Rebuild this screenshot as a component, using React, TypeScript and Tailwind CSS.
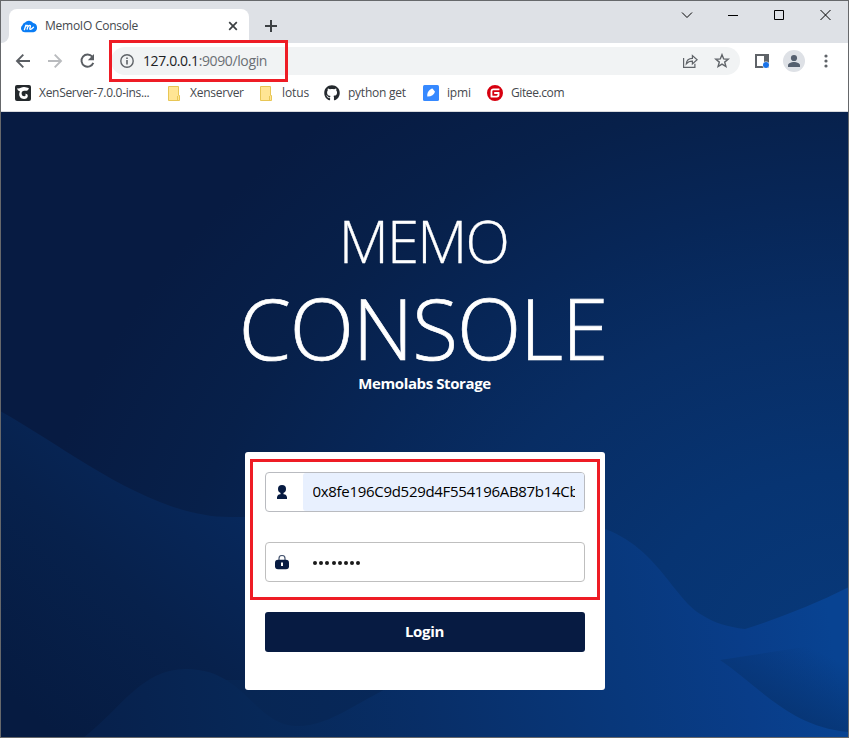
import React from "react";
import { SiGitee } from "react-icons/si";
import { FaGithub } from "react-icons/fa";

function TabStrip() {
  return (
    <div className="flex h-[42px] shrink-0 items-end bg-[#dee1e6]">
      <svg width="8" height="8" viewBox="0 0 8 8" className="shrink-0">
        <path d="M8 0v8H0a8 8 0 0 0 8-8z" fill="#fff" />
      </svg>
      <div className="flex h-[34px] w-[240px] items-center rounded-t-lg bg-white pl-3">
        <svg width="16" height="16" viewBox="0 0 16 16" className="shrink-0">
          <path d="M4 14.300a4 4 0 0 1-2.600-7A4 4 0 0 1 4 4.600a5 5 0 0 1 8.200.5 4.700 4.700 0 0 1 .2 9.200z" fill="#0a7df5" />
          <path d="M3.400 11.700 4.900 7.200M4.400 8.900c1.100-1.800 2.900-2.200 2.500-.4l-.8 2.700M6.800 8.900c1.200-1.800 3-2.200 2.600-.4l-.6 2c-.3 1.300 1.300 1.300 3.700-1.200" fill="none" stroke="#fff" strokeWidth="1.300" strokeLinejoin="round" strokeLinecap="round" />
        </svg>
        <span className="ml-2 w-[94px] whitespace-nowrap text-[12px] tracking-[-0.25px] text-[#45494e]">MemoIO Console</span>
        <svg width="10" height="10" viewBox="0 0 10 10" className="ml-auto mr-[11px]">
          <path d="m1.200 1.200 7.600 7.600m0-7.600L1.200 8.800" stroke="#3c4043" strokeWidth="1.700" />
        </svg>
      </div>
      <svg width="12" height="12" viewBox="0 0 12 12" className="mb-[11px] ml-[16px]">
        <path d="M6 0v12M0 6h12" stroke="#3c4043" strokeWidth="2" />
      </svg>
      <div className="mb-[22px] ml-auto flex items-center pr-[17px] text-black">
        <svg width="12" height="12" viewBox="0 0 12 12" fill="none" stroke="currentColor" className="mr-[35px]">
          <path d="m1 3.500 5 5 5-5" />
        </svg>
        <svg width="10" height="12" viewBox="0 0 10 12" fill="none" stroke="currentColor" className="mr-[36px]">
          <path d="M0 6.500h10" />
        </svg>
        <svg width="11" height="12" viewBox="0 0 11 12" fill="none" stroke="currentColor" className="mr-[35px]">
          <path d="M.5 1.500h9v9h-9z" />
        </svg>
        <svg width="11" height="12" viewBox="0 0 11 12" fill="none" stroke="currentColor">
          <path d="m.5 1 10 10m0-10-10 10" />
        </svg>
      </div>
    </div>
  );
}

function Toolbar() {
  return (
    <div className="flex h-[36px] shrink-0 items-center bg-white">
      <svg width="94" height="16" viewBox="0 0 94 16" className="ml-[14px] shrink-0" fill="none" strokeWidth="1.900">
        <path d="M15 8H2m6.300-6.300L2 8l6.300 6.300" stroke="#5a5e63" />
        <path d="M33 8h13m-6.300-6.300L46 8l-6.300 6.300" stroke="#b9bbbe" />
        <path d="M77.300 3.700A6.100 6.100 0 1 0 78.300 9.800" stroke="#5a5e63" />
        <path d="M79 1v6.200h-6.200z" fill="#5a5e63" />
      </svg>
      <div className="ml-[2px] flex h-7 w-[629px] shrink-0 items-center rounded-full bg-[#f1f3f4] pl-[9px] pr-[10px]">
        <svg width="14" height="14" viewBox="0 0 14 14" fill="none" stroke="#5f6368" strokeWidth="1.400">
          <circle cx="7" cy="7" r="6.200" />
          <path d="M7 6v4.500M7 3.500v1.400" strokeWidth="1.600" />
        </svg>
        <span className="ml-[9px] whitespace-nowrap pb-px text-[14px] tracking-[-0.38px] text-[#202124]">
          127.0.0.1<span className="text-[#6b6f74]">:9090/login</span>
        </span>
        <svg width="16" height="14" viewBox="0 0 16 14" className="ml-auto" fill="none" stroke="#5f6368" strokeWidth="1.200">
          <path d="M1.600 4v9.300h11.300V9.700" />
          <path d="M4.300 9.800c.3-3.500 2.500-5.300 6.100-5.400V1.500l4.700 4.200-4.700 4.200V7.100c-2.600 0-4.500.8-6.100 2.700z" />
        </svg>
        <svg width="16" height="16" viewBox="0 0 16 16" className="ml-4" fill="none" stroke="#5f6368" strokeWidth="1.400">
          <path d="m8 1.700 1.700 4.200 4.500.3-3.500 2.900 1.200 4.400L8 11.100l-3.900 2.400 1.200-4.400-3.500-2.900 4.500-.3z" />
        </svg>
      </div>
      <svg width="15" height="15" viewBox="0 0 15 15" className="ml-[15px]">
        <path d="M1 1h12v12H1z" fill="#fff" stroke="#5f6368" strokeWidth="2" />
        <path d="M9 0h5v8H9z" fill="#5f6368" />
        <circle cx="11" cy="11" r="3.500" fill="#fff" />
        <circle cx="11" cy="11" r="3" fill="#1a73e8" />
      </svg>
      <svg width="22" height="22" viewBox="0 0 22 22" className="ml-[13px]">
        <circle cx="11" cy="11" r="11" fill="#dee1e6" />
        <circle cx="11" cy="8" r="3.100" fill="#55606f" />
        <path d="M5 17v-1.500c0-2.200 3.500-3.400 6-3.400s6 1.200 6 3.400V17z" fill="#55606f" />
      </svg>
      <svg width="4" height="14" viewBox="0 0 4 14" className="ml-[19px]" fill="#5f6368">
        <circle cx="2" cy="2" r="1.600" />
        <circle cx="2" cy="7" r="1.600" />
        <circle cx="2" cy="12" r="1.600" />
      </svg>
    </div>
  );
}

function Folder() {
  return (
    <svg width="13" height="15" viewBox="0 0 13 15">
      <path d="M1.500.500h10v9h1v5h-11z" fill="#ffe594" stroke="#e8c655" />
      <path d="M10.500 10v4" stroke="#e8c655" />
    </svg>
  );
}

function Bookmark({ icon, label, className }: { icon: React.ReactNode; label: string; className: string }) {
  return (
    <div className={`flex shrink-0 items-center gap-2 whitespace-nowrap ${className}`}>
      {icon}
      <span>{label}</span>
    </div>
  );
}

function Bookmarks() {
  return (
    <div className="flex h-[33px] shrink-0 items-center border-b border-[#d8dadd] bg-white pb-[4px] pl-[14px] text-[12px] text-[#45494e]">
      <Bookmark
        className="w-[152px] tracking-[-0.3px]"
        label="XenServer-7.0.0-ins..."
        icon={
          <svg width="16" height="16" viewBox="0 0 16 16">
            <rect width="16" height="16" rx="2" fill="#24292c" />
            <path d="M2 3.200C4.500 4.300 6 2 9 2c2.300 0 3.500 1.200 4.900 1-.3 2.600-2.400 3-4 2.700-2-.3-3.500.9-3.300 3 .2 2.100 2 3 3.400 2.300 1-.6.900-1.600.2-2.100.9-.4 2.600.2 2.600 2.100 0 2-1.800 3-3.800 2.900-3.300-.1-5.300-2.700-4.700-5.700.1-.8.5-1.400.8-1.800C3.400 6 2.300 4.800 2 3.200z" fill="#fff" />
          </svg>
        }
      />
      <Bookmark className="w-[92px] tracking-[-0.25px] [&>span]:ml-[2px]" label="Xenserver" icon={<Folder />} />
      <Bookmark className="w-[65px] tracking-[-0.1px] [&>span]:ml-[2px]" label="lotus" icon={<Folder />} />
      <Bookmark className="w-[99px] tracking-[-0.25px]" label="python get" icon={<FaGithub size={16} color="#24292e" />} />
      <Bookmark
        className="w-[64px] tracking-[-0.2px]"
        label="ipmi"
        icon={
          <svg width="16" height="16" viewBox="0 0 16 16">
            <rect width="16" height="16" rx="1.500" fill="#3689ff" />
            <path d="M4.300 11.500C3.700 7.500 6.500 4 9.500 3.500L12 6.700c-1 3-3.500 4.900-7.700 4.800z" fill="#fff" />
          </svg>
        }
      />
      <Bookmark className="tracking-[-0.4px]" label="Gitee.com" icon={<SiGitee size={16} color="#d7000f" />} />
    </div>
  );
}

function Waves() {
  return (
    <svg className="absolute inset-0 h-full w-full" viewBox="1 112 847 625" preserveAspectRatio="none">
      <defs>
        <radialGradient id="sky" gradientUnits="userSpaceOnUse" cx="0" cy="0" r="1" gradientTransform="translate(850 650) scale(960 800)">
          <stop offset="0" stopColor="#08397a" />
          <stop offset=".22" stopColor="#073472" />
          <stop offset=".42" stopColor="#082d64" />
          <stop offset=".56" stopColor="#072657" />
          <stop offset=".7" stopColor="#07204a" />
          <stop offset=".86" stopColor="#071b42" />
        </radialGradient>
        <linearGradient id="left" gradientUnits="userSpaceOnUse" x1="270" y1="510" x2="60" y2="740">
          <stop offset="0" stopColor="#07295e" />
          <stop offset=".5" stopColor="#07214c" />
          <stop offset="1" stopColor="#061b41" />
        </linearGradient>
        <linearGradient id="dip" gradientUnits="userSpaceOnUse" x1="100" y1="720" x2="400" y2="700">
          <stop offset="0" stopColor="#071f49" />
          <stop offset=".5" stopColor="#072654" />
          <stop offset="1" stopColor="#07285a" />
        </linearGradient>
        <linearGradient id="front" gradientUnits="userSpaceOnUse" x1="80" y1="730" x2="830" y2="620">
          <stop offset="0" stopColor="#07204b" />
          <stop offset=".24" stopColor="#072858" />
          <stop offset=".45" stopColor="#082e67" />
          <stop offset=".72" stopColor="#08387c" />
          <stop offset=".88" stopColor="#093d89" />
          <stop offset="1" stopColor="#084392" />
        </linearGradient>
        <linearGradient id="shade" gradientUnits="userSpaceOnUse" x1="775" y1="708" x2="805" y2="645">
          <stop offset="0" stopColor="#073472" stopOpacity=".85" />
          <stop offset="1" stopColor="#073472" stopOpacity="0" />
        </linearGradient>
      </defs>
      <path d="M0 111h849v627H0z" fill="url(#sky)" />
      <path d="M0 411C70 450 150 517 230 517c100 0 180 20 250 80v141H0z" fill="url(#left)" />
      <path d="M200 680h220v58H200z" fill="url(#dip)" />
      <path d="M83 738c38-29 58-69 103-69 60 0 68 57 112 57 35 0 62-28 112-48 60-50 80-155 171-155 72 10 90 75 121 92 12 8 26 12 43 14 35-11 70-25 104-42v151z" fill="url(#front)" />
      <path d="M720 660c40 27 70 67 129 72V640z" fill="url(#shade)" />
    </svg>
  );
}

export default function App() {
  return (
    <div className="relative flex h-[738px] w-[849px] flex-col overflow-hidden border border-[#66686b] font-['Open_Sans','Noto_Sans',sans-serif]">
      <TabStrip />
      <Toolbar />
      <Bookmarks />
      <main className="relative flex flex-1 flex-col items-center bg-[#071b42]">
        <Waves />
        <div className="relative flex flex-col items-center text-white">
          <h1 className="mt-[89px] h-[80px] whitespace-nowrap pr-[2px] text-[58px] font-light leading-[80px] tracking-[-1.8px] [-webkit-text-stroke:0.3px_white]">MEMO</h1>
          <h1 className="mt-[-3px] h-[100px] whitespace-nowrap pr-[3px] text-[84px] font-light leading-[100px] tracking-[-1.1px] [-webkit-text-stroke:0.7px_white]">CONSOLE</h1>
          <p className="mt-[-5px] h-5 whitespace-nowrap text-[15px] font-bold leading-5 tracking-[-0.4px]">Memolabs Storage</p>
        </div>
        <form className="relative mt-[59px] flex h-[238px] w-[360px] flex-col rounded-[3px] bg-white p-5">
          <div className="flex h-10 shrink-0 overflow-hidden rounded-[4px] border border-[#b9bbc0]">
            <div className="flex w-[37px] shrink-0 items-center pl-[11px]">
              <svg width="10" height="14" viewBox="0 0 10 14" fill="#071b42">
                <circle cx="5" cy="4" r="4" />
                <path d="M3.500 7h3v2.300h-3zM0 14v-1.500C0 10 2 9 5 9s5 1 5 3.500V14z" />
              </svg>
            </div>
            <div className="flex flex-1 items-center overflow-hidden rounded-l-[3px] bg-[#e8f0fe] pb-[2px] pl-[10px] pr-[9px] text-black">
              <span className="w-full overflow-hidden whitespace-nowrap text-[15px] tracking-[-0.3px]">0x8fe196C9d529d4F554196AB87b14Cb</span>
            </div>
          </div>
          <div className="mt-[30px] flex h-10 shrink-0 items-center rounded-[4px] border border-[#bfbfbf]">
            <svg width="14" height="15" viewBox="0 0 14 15" className="ml-[9px]">
              <path d="M4 6V3.500a3 3 0 0 1 6 0V6" fill="none" stroke="#4b5973" strokeWidth="1.200" />
              <rect y="4.700" width="14" height="9.600" rx="3" fill="#071b42" />
              <path d="M6 7.500h2V11H6z" fill="#fff" />
            </svg>
            <div className="ml-[24.500px] flex gap-[2.200px] pt-[2px]">
              {Array.from({ length: 8 }, (_, i) => (
                <span key={i} className="h-1 w-1 rounded-full bg-[#1a1a1a]" />
              ))}
            </div>
          </div>
          <button type="button" className="mt-[30px] h-10 shrink-0 rounded-[3px] bg-[#071b42] pb-[2px] text-[15px] font-bold tracking-[-0.3px] text-white">Login</button>
        </form>
      </main>
      <div className="absolute left-[108px] top-[39px] h-[42px] w-[179px] border-[3px] border-[#ee1c25]" />
      <div className="absolute left-[249px] top-[458px] h-[141px] w-[350px] border-[3px] border-[#ee1c25]" />
    </div>
  );
}
